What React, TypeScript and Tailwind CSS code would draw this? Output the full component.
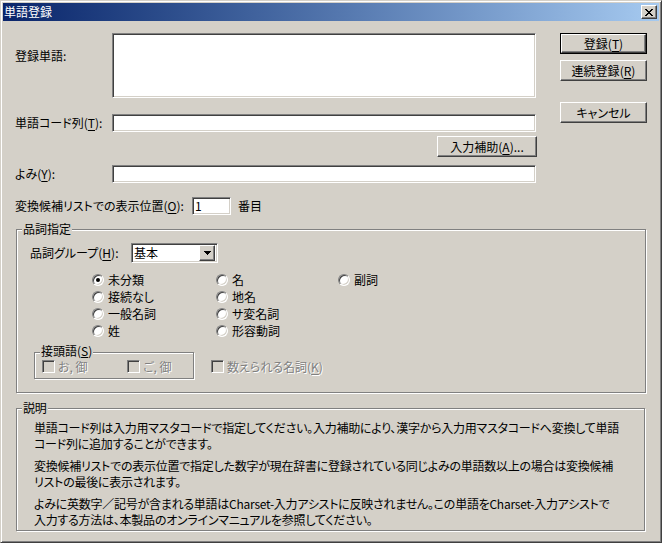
import React from "react";

const raised =
  "border border-t-white border-l-white border-r-[#404040] border-b-[#404040] shadow-[inset_-1px_-1px_0_#808080] bg-[#d4d0c8]";
const sunken =
  "border border-t-[#808080] border-l-[#808080] border-r-white border-b-white shadow-[inset_1px_1px_0_#404040,inset_-1px_-1px_0_#d4d0c8]";
const etched = "relative border border-[#808080] shadow-[inset_1px_1px_0_#fff,1px_1px_0_#fff]";
const legend = "absolute -top-[7px] left-[5px] px-[1px] bg-[#d4d0c8] leading-[12px] whitespace-nowrap";
const disabled = "text-[#808080] [text-shadow:1px_1px_0_#fff]";

function Key({ k }: { k: string }) {
  return (
    <>
      (<u className="underline-offset-[2px]">{k}</u>)
    </>
  );
}

function Button({ className, children, isDefault }: { className: string; children: React.ReactNode; isDefault?: boolean }) {
  if (isDefault) {
    return (
      <div className={`border border-black ${className}`}>
        <div className={`${raised} w-full h-full flex items-center justify-center`}>{children}</div>
      </div>
    );
  }
  return <div className={`${raised} flex items-center justify-center ${className}`}>{children}</div>;
}

function Radio({ label, checked }: { label: string; checked?: boolean }) {
  return (
    <div className="flex items-center h-[17px]">
      <span className="w-3 h-3 shrink-0 rounded-full bg-white border border-t-[#808080] border-l-[#808080] border-r-white border-b-white shadow-[inset_1px_1px_0_#404040,inset_-1px_-1px_0_#d4d0c8] flex items-center justify-center">
        {checked && <span className="w-1 h-1 rounded-full bg-black" />}
      </span>
      <span className="ml-[4px] leading-[14px]">{label}</span>
    </div>
  );
}

function Check({ children }: { children: React.ReactNode }) {
  return (
    <div className="flex items-center h-[13px]">
      <span className={`w-[13px] h-[13px] shrink-0 bg-[#d4d0c8] ${sunken}`} />
      <span className={`ml-[3px] leading-[13px] whitespace-nowrap ${disabled}`}>{children}</span>
    </div>
  );
}

export default function App() {
  return (
    <div className="w-[662px] h-[543px] bg-[#d4d0c8] border border-t-[#d4d0c8] border-l-[#d4d0c8] border-r-[#404040] border-b-[#404040] shadow-[inset_1px_1px_0_#fff,inset_-1px_-1px_0_#808080] p-[2px] flex flex-col text-[12px] text-black font-['Noto_Sans_CJK_JP','Liberation_Sans',sans-serif] [font-feature-settings:'palt']">
      {/* title bar */}
      <div className="h-[18px] shrink-0 flex items-center justify-between bg-linear-to-r from-[#0a246a] to-[#a6caf0] pl-[1px] pr-[2px]">
        <span className="text-white leading-[14px]">単語登録</span>
        <div className={`${raised} w-[16px] h-[14px] flex items-center justify-center`}>
          <svg width="8" height="7" viewBox="0 0 8 7" shapeRendering="crispEdges">
            <path d="M0 0h2v1h-2zM6 0h2v1h-2zM1 1h2v1h-2zM5 1h2v1h-2zM2 2h4v1h-4zM3 3h2v1h-2zM2 4h4v1h-4zM1 5h2v1h-2zM5 5h2v1h-2zM0 6h2v1h-2zM6 6h2v1h-2z" fill="#000" />
          </svg>
        </div>
      </div>

      {/* client */}
      <div className="flex-1 flex flex-col">
        <div className="flex pt-[12px] pl-[12px]">
          {/* form */}
          <div className="w-[522px] flex flex-col">
            <div className="flex h-[65px]">
              <span className="w-[97px] pt-[16px] leading-[14px]">登録単語:</span>
              <div className={`w-[424px] h-[65px] bg-white ${sunken}`} />
            </div>
            <div className="flex items-center mt-[16px] h-[18px]">
              <span className="w-[97px] leading-[14px] whitespace-nowrap">
                単語コード列<Key k="T" />:
              </span>
              <div className={`w-[424px] h-[18px] bg-white ${sunken}`} />
            </div>
            <div className="flex justify-end mt-[4px]">
              <Button className="w-[100px] h-[21px]">
                入力補助<Key k="A" />...
              </Button>
            </div>
            <div className="flex items-center mt-[8px] h-[18px]">
              <span className="w-[97px] leading-[14px]">
                よみ<Key k="Y" />:
              </span>
              <div className={`w-[424px] h-[18px] bg-white ${sunken}`} />
            </div>
            <div className="flex items-center mt-[14px] h-[18px]">
              <span className="w-[177px] leading-[14px] whitespace-nowrap">
                変換候補リストでの表示位置<Key k="O" />:
              </span>
              <div className={`w-[39px] h-[18px] bg-white pl-[2px] flex items-center leading-[14px] ${sunken}`}>1</div>
              <span className="ml-[7px] leading-[14px]">番目</span>
            </div>
          </div>

          {/* buttons */}
          <div className="ml-[23px] w-[87px] flex flex-col">
            <Button isDefault className="w-[87px] h-[21px]">
              登録<Key k="T" />
            </Button>
            <Button className="w-[87px] h-[21px] mt-[6px]">
              連続登録<Key k="R" />
            </Button>
            <Button className="w-[87px] h-[21px] mt-[21px]">キャンセル</Button>
          </div>
        </div>

        {/* 品詞指定 */}
        <div className={`${etched} ml-[13px] mt-[14px] w-[630px] h-[164px] pl-[13px] pt-[13px]`}>
          <span className={legend}>品詞指定</span>
          <div className="flex items-center h-[20px]">
            <span className="w-[101px] leading-[14px] whitespace-nowrap">
              品詞グループ<Key k="H" />:
            </span>
            <div className={`w-[87px] h-[20px] bg-white flex items-center justify-between pl-[2px] pr-[2px] ${sunken}`}>
              <span className="leading-[14px]">基本</span>
              <div className={`${raised} w-[16px] h-[16px] flex items-center justify-center`}>
                <svg width="7" height="4" viewBox="0 0 7 4" shapeRendering="crispEdges">
                  <path d="M0 0h7v1h-7zM1 1h5v1h-5zM2 2h3v1h-3zM3 3h1v1h-1z" fill="#000" />
                </svg>
              </div>
            </div>
          </div>

          <div className="flex mt-[8px] ml-[62px]">
            <div className="w-[124px] flex flex-col">
              <Radio label="未分類" checked />
              <Radio label="接続なし" />
              <Radio label="一般名詞" />
              <Radio label="姓" />
            </div>
            <div className="w-[122px] flex flex-col">
              <Radio label="名" />
              <Radio label="地名" />
              <Radio label="サ変名詞" />
              <Radio label="形容動詞" />
            </div>
            <div className="flex flex-col">
              <Radio label="副詞" />
            </div>
          </div>

          <div className="flex items-end mt-[13px] ml-[4px]">
            <div className={`${etched} w-[160px] h-[27px] pl-[7px] pt-[7px] flex`}>
              <span className="absolute -top-[8px] left-[5px] px-[1px] bg-[#d4d0c8] leading-[12px] whitespace-nowrap">
                接頭語(<u className="underline-offset-[1px]">S</u>)
              </span>
              <div className="w-[85px]">
                <Check>お, 御</Check>
              </div>
              <Check>ご, 御</Check>
            </div>
            <div className="ml-[17px] mb-[6px]">
              <Check>
                数えられる名詞<Key k="K" />
              </Check>
            </div>
          </div>
        </div>

        {/* 説明 */}
        <div className={`${etched} ml-[13px] mt-[15px] w-[629px] h-[123px] pl-[17px] pt-[11px] leading-[15.5px] tracking-[-0.25px] whitespace-nowrap`}>
          <span className={legend}>説明</span>
          <p>
            単語コード列は入力用マスタコードで指定してください。入力補助により、漢字から入力用マスタコードへ変換して単語
            <br />
            コード列に追加することができます。
          </p>
          <p className="mt-[7px]">
            変換候補リストでの表示位置で指定した数字が現在辞書に登録されている同じよみの単語数以上の場合は変換候補
            <br />
            リストの最後に表示されます。
          </p>
          <p className="mt-[7px]">
            よみに英数字／記号が含まれる単語はCharset-入力アシストに反映されません。この単語をCharset-入力アシストで
            <br />
            入力する方法は、本製品のオンラインマニュアルを参照してください。
          </p>
        </div>
      </div>
    </div>
  );
}
